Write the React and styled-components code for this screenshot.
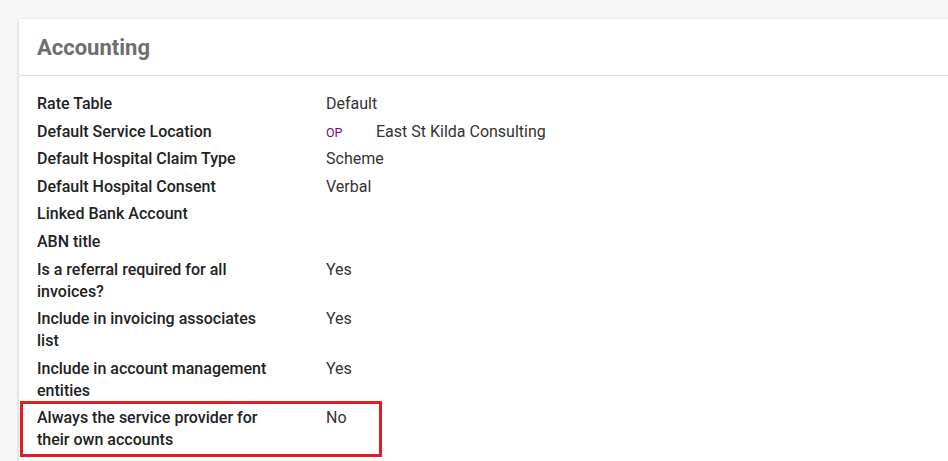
import styled, { createGlobalStyle } from "styled-components";

const GlobalStyle = createGlobalStyle`
  html, body {
    margin: 0;
    padding: 0;
    background: #f7f7f7;
    font-family: Roboto, "Liberation Sans", Arial, sans-serif;
    overflow: hidden;
  }
`;

const rows = [
  { label: "Rate Table", value: "Default" },
  { label: "Default Service Location", value: "East St Kilda Consulting", badge: "OP" },
  { label: "Default Hospital Claim Type", value: "Scheme" },
  { label: "Default Hospital Consent", value: "Verbal" },
  { label: "Linked Bank Account", value: "" },
  { label: "ABN title", value: "" },
  { label: "Is a referral required for all invoices?", value: "Yes" },
  { label: "Include in invoicing associates list", value: "Yes" },
  { label: "Include in account management entities", value: "Yes" },
  { label: "Always the service provider for their own accounts", value: "No", highlight: true },
  { label: "Include in default invoice list for", value: "" },
];

export default function App() {
  return (
    <>
      <GlobalStyle />
      <Page>
        <PrevCard />
        <Card>
          <CardHeader>
            <Title>Accounting</Title>
          </CardHeader>
          <CardBody>
            {rows.map((row) => (
              <Row key={row.label}>
                <Label>{row.label}</Label>
                <Value>
                  {row.badge && <Badge>{row.badge}</Badge>}
                  {row.value}
                </Value>
                {row.highlight && <Highlight />}
              </Row>
            ))}
          </CardBody>
        </Card>
      </Page>
    </>
  );
}

const Page = styled.div`
  height: 461px;
  padding-left: 19px;
  overflow: hidden;
`;

const PrevCard = styled.div`
  height: 0;
  margin-right: -40px;
  background: #fff;
  box-shadow: 0 1px 5px rgba(0, 0, 0, 0.35);
`;

const Card = styled.div`
  margin-top: 19px;
  margin-right: -40px;
  background: #fff;
  box-shadow: 0 1px 4px rgba(0, 0, 0, 0.18);
  border-radius: 2px 0 0 0;
`;

const CardHeader = styled.div`
  height: 55px;
  padding: 1px 18px 0;
  display: flex;
  align-items: center;
  border-bottom: 1px solid #dcdcdc;
`;

const Title = styled.h2`
  margin: 0;
  font-size: 22px;
  font-weight: 700;
  color: #6e6e6e;
`;

const CardBody = styled.div`
  padding: 14px 18px 20px;
`;

const Row = styled.div`
  position: relative;
  display: grid;
  grid-template-columns: 230px 1fr;
  column-gap: 59px;
  padding: 3px 0 2.6px;
  font-size: 16px;
  line-height: 22px;
  color: #2b2b2b;
`;

const Label = styled.div`
  font-weight: 500;
  color: #222;
`;

const Value = styled.div`
  color: #333;
`;

const Badge = styled.span`
  display: inline-block;
  width: 50px;
  font-size: 12.5px;
  line-height: 1;
  color: #7b0a7b;
`;

const Highlight = styled.div`
  position: absolute;
  left: -17px;
  top: -3px;
  width: 356px;
  height: 50px;
  border: 3px solid #e31b23;
  pointer-events: none;
`;
